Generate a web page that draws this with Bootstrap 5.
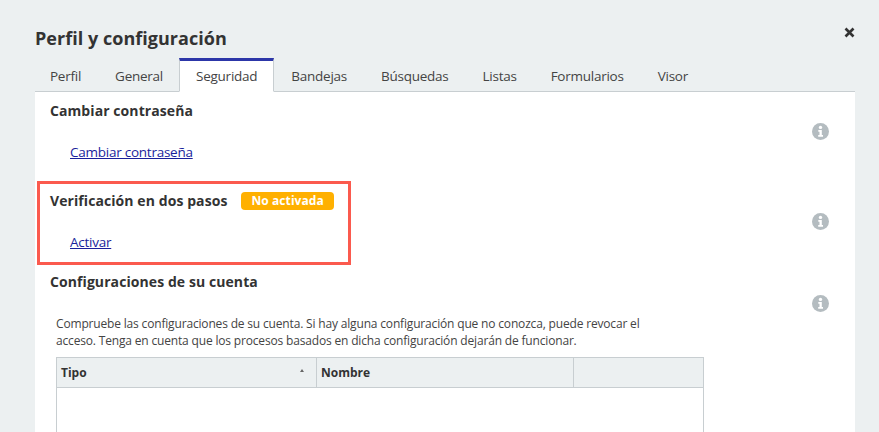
<!DOCTYPE html>
<html lang="es">
<head>
<meta charset="utf-8">
<title>Perfil y configuración</title>
<link rel="stylesheet" href="https://cdn.jsdelivr.net/npm/bootstrap@5.3.0/dist/css/bootstrap.min.css">
<style>
html,body{height:432px;overflow:hidden}
body{background:#ecf0f1;color:#333;font-family:"Open Sans","Noto Sans",sans-serif;font-size:14px}
.shell{padding:27px 24px 0 35px;position:relative;height:432px;overflow:hidden}
.dlg-title{font-size:18px;font-weight:700;line-height:22px;margin:0 0 9px;color:#333;letter-spacing:.03px}
.close-x{position:absolute;left:842px;top:25px;width:15px;height:15px;display:block}
.tabbar{border-bottom:1px solid #c8ced1;gap:0;height:34px}
.tabbar .nav-link{padding:5px 16px 0;border:1px solid transparent;border-radius:0;color:#444;font-size:13.5px;letter-spacing:-.25px;line-height:24px;height:34px;background:none;margin:0}
.tabbar .nav-item:first-child .nav-link{padding-left:14px}
.tabbar .nav-item:nth-child(2) .nav-link{padding-right:15px}
.tabbar .nav-link.active{background:#fff;color:#444;border-color:#c8ced1;border-bottom-color:#fff;border-top:3px solid #2c36a8;padding-top:3px}
.panel-w{background:#fff;padding:0 15px;height:400px}
.sect{display:flex;justify-content:space-between}
.sect-main{flex:1 1 auto}
.sect-h{font-size:14px;font-weight:700;line-height:20px;margin:0;color:#333;letter-spacing:.08px}
.sect-lnk{color:#1a1f9c;font-size:13.5px;letter-spacing:-.25px;text-decoration:underline;line-height:20px;display:inline-block;margin-left:20px}
.info-i{width:17px;height:17px;display:block;flex:none;margin-right:11px}
.s1{padding-top:9px;height:89px}
.s1 .sect-lnk{margin-top:21px}
.s1 .info-i{margin-top:22px}
.s2{height:84px;position:relative}
.redbox{position:absolute;left:-13px;top:0;width:314px;height:84px;border:3px solid #fb5a4e;pointer-events:none}
.s2 .sect-h{padding-top:10px;display:flex;align-items:center;gap:14px}
.pill{background:#ffb000;color:#fff;font-size:12px;font-weight:700;border-radius:4px;padding:0 10px;line-height:18px;height:18px;margin-left:0}
.s2 .sect-lnk{margin-top:21px}
.s2 .info-i{margin-top:32px}
.s3{padding-top:7px}
.s3 .info-i{margin-top:23px}
.note{font-size:12px;letter-spacing:-.17px;line-height:17px;margin:0 0 8px 6px;width:590px;color:#444;padding-top:23px}
.grid-t{width:648px;margin-left:6px;border:1px solid #c8ced1;border-collapse:collapse;table-layout:fixed;font-size:12px}
.grid-t th{background:#ecf0f1;border-right:1px solid #c8ced1;border-bottom:1px solid #c8ced1;height:30px;padding:0 4px;font-weight:700;color:#333;vertical-align:middle}
.grid-t td{height:60px;padding:0}
.sort-up{float:right;margin:5px 8px 0 0;width:0;height:0;border-left:2.5px solid transparent;border-right:2.5px solid transparent;border-bottom:3px solid #666}
</style>
</head>
<body>
<div class="shell">
  <h1 class="dlg-title">Perfil y configuración</h1>
  <svg class="close-x" viewBox="0 0 15 15" aria-label="Cerrar"><path d="M3.5 3.5l8 8M11.5 3.5l-8 8" stroke="#333" stroke-width="2.6" fill="none"/></svg>
  <ul class="nav tabbar">
    <li class="nav-item"><a class="nav-link" href="#">Perfil</a></li>
    <li class="nav-item"><a class="nav-link" href="#">General</a></li>
    <li class="nav-item"><a class="nav-link active" href="#">Seguridad</a></li>
    <li class="nav-item"><a class="nav-link" href="#">Bandejas</a></li>
    <li class="nav-item"><a class="nav-link" href="#">Búsquedas</a></li>
    <li class="nav-item"><a class="nav-link" href="#">Listas</a></li>
    <li class="nav-item"><a class="nav-link" href="#">Formularios</a></li>
    <li class="nav-item"><a class="nav-link" href="#">Visor</a></li>
  </ul>
  <div class="panel-w">
    <div class="sect s1">
      <div class="sect-main">
        <h2 class="sect-h">Cambiar contraseña</h2>
        <a class="sect-lnk" href="#">Cambiar contraseña</a>
      </div>
      <svg class="info-i" viewBox="0 0 17 17"><circle cx="8.5" cy="8.5" r="8.5" fill="#b4bcc0"/><circle cx="8.5" cy="4.4" r="1.7" fill="#fff"/><path d="M6.3 7h3.5v5h1.2v1.7H6.2V12h1.3V8.7H6.3z" fill="#fff"/></svg>
    </div>
    <div class="sect s2">
      <div class="redbox"></div>
      <div class="sect-main">
        <h2 class="sect-h">Verificación en dos pasos <span class="pill">No activada</span></h2>
        <a class="sect-lnk" href="#">Activar</a>
      </div>
      <svg class="info-i" viewBox="0 0 17 17"><circle cx="8.5" cy="8.5" r="8.5" fill="#b4bcc0"/><circle cx="8.5" cy="4.4" r="1.7" fill="#fff"/><path d="M6.3 7h3.5v5h1.2v1.7H6.2V12h1.3V8.7H6.3z" fill="#fff"/></svg>
    </div>
    <div class="sect s3">
      <div class="sect-main">
        <h2 class="sect-h">Configuraciones de su cuenta</h2>
        <p class="note">Compruebe las configuraciones de su cuenta. Si hay alguna configuración que no conozca, puede revocar el acceso. Tenga en cuenta que los procesos basados en dicha configuración dejarán de funcionar.</p>
        <table class="grid-t">
          <colgroup><col style="width:260px"><col style="width:257px"><col></colgroup>
          <thead><tr><th>Tipo<span class="sort-up"></span></th><th>Nombre</th><th></th></tr></thead>
          <tbody><tr><td colspan="3"></td></tr></tbody>
        </table>
      </div>
      <svg class="info-i" viewBox="0 0 17 17"><circle cx="8.5" cy="8.5" r="8.5" fill="#b4bcc0"/><circle cx="8.5" cy="4.4" r="1.7" fill="#fff"/><path d="M6.3 7h3.5v5h1.2v1.7H6.2V12h1.3V8.7H6.3z" fill="#fff"/></svg>
    </div>
  </div>
</div>
</body>
</html>
